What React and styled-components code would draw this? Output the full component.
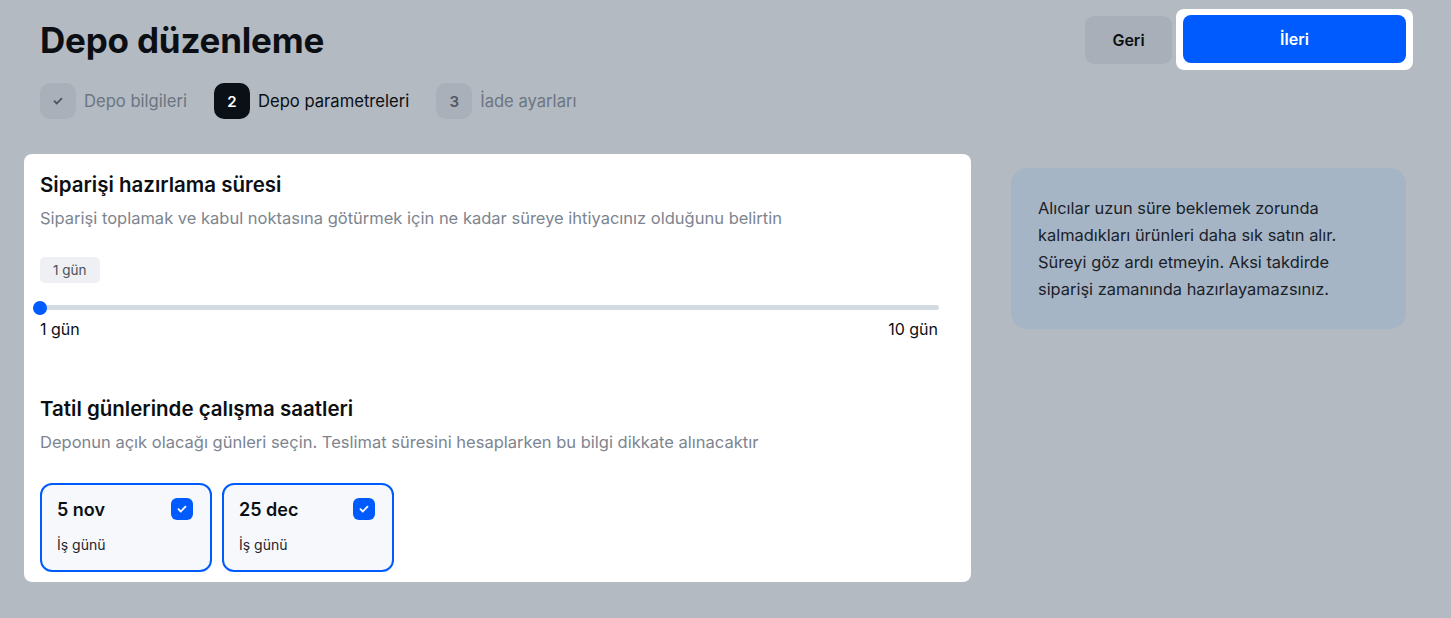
import styled, { createGlobalStyle } from "styled-components";

const GlobalStyle = createGlobalStyle`
  body {
    margin: 0;
    background: #b3bac2;
    font-family: Inter, "Noto Sans", sans-serif;
  }
`;

const steps = [
  { label: "Depo bilgileri", state: "done" },
  { label: "Depo parametreleri", state: "active", n: 2 },
  { label: "İade ayarları", state: "todo", n: 3 },
];

const days = [
  { date: "5 nov", note: "İş günü" },
  { date: "25 dec", note: "İş günü" },
];

function Check({ color = "#fff", size = 12 }) {
  return (
    <svg width={size} height={size} viewBox="0 0 12 12" fill="none">
      <path
        d="M2.5 6.2l2.3 2.3 4.7-4.9"
        stroke={color}
        strokeWidth="1.8"
        strokeLinecap="round"
        strokeLinejoin="round"
      />
    </svg>
  );
}

export default function App() {
  return (
    <Page>
      <GlobalStyle />
      <Header>
        <div>
          <Title>Depo düzenleme</Title>
          <Steps>
            {steps.map((s) => (
              <Step key={s.label}>
                <StepBadge state={s.state}>
                  {s.state === "done" ? <Check color="#4a525c" /> : s.n}
                </StepBadge>
                <StepLabel state={s.state}>{s.label}</StepLabel>
              </Step>
            ))}
          </Steps>
        </div>
        <Actions>
          <BackButton>Geri</BackButton>
          <Spotlight>
            <NextButton>İleri</NextButton>
          </Spotlight>
        </Actions>
      </Header>

      <Body>
        <Card>
          <SectionTitle>Siparişi hazırlama süresi</SectionTitle>
          <SectionHint>
            Siparişi toplamak ve kabul noktasına götürmek için ne kadar süreye
            ihtiyacınız olduğunu belirtin
          </SectionHint>
          <ValueChip>1 gün</ValueChip>
          <Track>
            <Thumb />
          </Track>
          <TrackLabels>
            <span>1 gün</span>
            <span>10 gün</span>
          </TrackLabels>

          <SectionTitle second>Tatil günlerinde çalışma saatleri</SectionTitle>
          <SectionHint>
            Deponun açık olacağı günleri seçin. Teslimat süresini hesaplarken bu
            bilgi dikkate alınacaktır
          </SectionHint>
          <DayRow>
            {days.map((d) => (
              <DayCard key={d.date}>
                <DayTop>
                  <DayDate>{d.date}</DayDate>
                  <CheckBox>
                    <Check />
                  </CheckBox>
                </DayTop>
                <DayNote>{d.note}</DayNote>
              </DayCard>
            ))}
          </DayRow>
        </Card>

        <Info>
          Alıcılar uzun süre beklemek zorunda kalmadıkları ürünleri daha sık
          satın alır. Süreyi göz ardı etmeyin. Aksi takdirde siparişi zamanında
          hazırlayamazsınız.
        </Info>
      </Body>
    </Page>
  );
}

const Page = styled.div`
  width: 1451px;
  height: 618px;
  box-sizing: border-box;
  padding: 9px 38px 0 24px;
`;

const Header = styled.div`
  display: flex;
  justify-content: space-between;
  align-items: flex-start;
  padding-left: 16px;
`;

const Title = styled.h1`
  margin: 10px 0 0;
  font-size: 35px;
  line-height: 42px;
  font-weight: 700;
  color: #0b0f14;
  letter-spacing: -0.2px;
`;

const Steps = styled.div`
  display: flex;
  gap: 27px;
  margin-top: 22px;
`;

const Step = styled.div`
  display: flex;
  align-items: center;
  gap: 8px;
`;

const StepBadge = styled.div`
  width: 36px;
  height: 36px;
  border-radius: 10px;
  display: flex;
  align-items: center;
  justify-content: center;
  font-size: 15px;
  font-weight: 600;
  background: ${(p) => (p.state === "active" ? "#0b1016" : "#a9b0b9")};
  color: ${(p) => (p.state === "active" ? "#ffffff" : "#4f5863")};
`;

const StepLabel = styled.span`
  font-size: 16.6px;
  color: ${(p) => (p.state === "active" ? "#0b0f14" : "#6c7581")};
`;

const Actions = styled.div`
  display: flex;
  align-items: center;
  gap: 4px;
`;

const BackButton = styled.button`
  width: 87px;
  height: 48px;
  border: none;
  border-radius: 9px;
  background: #a8afb8;
  font-family: inherit;
  font-size: 16px;
  font-weight: 600;
  color: #0b0f14;
`;

const Spotlight = styled.div`
  padding: 6px 7px 7px;
  background: #ffffff;
  border-radius: 8px;
`;

const NextButton = styled.button`
  display: block;
  width: 223px;
  height: 48px;
  border: none;
  border-radius: 8px;
  background: #005bff;
  font-family: inherit;
  font-size: 16px;
  font-weight: 600;
  color: #ffffff;
`;

const Body = styled.div`
  display: flex;
  align-items: flex-start;
  gap: 40px;
  margin-top: 35px;
`;

const Card = styled.div`
  width: 947px;
  box-sizing: border-box;
  background: #ffffff;
  border-radius: 8px;
  padding: 18px 16px 10px;
`;

const SectionTitle = styled.h2`
  margin: ${(p) => (p.second ? "57px" : "0")} 0 0;
  font-size: 20.5px;
  line-height: 26px;
  font-weight: 600;
  color: #0b0f14;
`;

const SectionHint = styled.p`
  margin: 10px 0 0;
  font-size: 16.5px;
  line-height: 20px;
  color: #7d858f;
`;

const ValueChip = styled.div`
  display: inline-flex;
  align-items: center;
  margin-top: 29px;
  height: 26px;
  padding: 0 13px;
  border-radius: 5px;
  background: #eef0f3;
  font-size: 13.5px;
  color: #4a525c;
`;

const Track = styled.div`
  position: relative;
  margin: 22px 0 0 -7px;
  width: 906px;
  height: 5px;
  border-radius: 3px;
  background: #d4dae2;
`;

const Thumb = styled.div`
  position: absolute;
  left: 0;
  top: -4.5px;
  width: 14px;
  height: 14px;
  border-radius: 50%;
  background: #005bff;
`;

const TrackLabels = styled.div`
  display: flex;
  justify-content: space-between;
  width: 898px;
  margin-top: 9px;
  font-size: 16px;
  color: #0b0f14;
`;

const DayRow = styled.div`
  display: flex;
  gap: 10px;
  margin-top: 31px;
`;

const DayCard = styled.div`
  width: 172px;
  height: 89px;
  box-sizing: border-box;
  border: 2px solid #005bff;
  border-radius: 12px;
  background: #f6f8fb;
  padding: 13px 17px 0 15px;
`;

const DayTop = styled.div`
  display: flex;
  justify-content: space-between;
  align-items: center;
`;

const DayDate = styled.span`
  font-size: 18px;
  font-weight: 600;
  color: #0b0f14;
`;

const CheckBox = styled.div`
  width: 22px;
  height: 22px;
  border-radius: 6px;
  background: #005bff;
  display: flex;
  align-items: center;
  justify-content: center;
`;

const DayNote = styled.div`
  margin-top: 16px;
  font-size: 14px;
  color: #1f252c;
`;

const Info = styled.div`
  margin-top: 14px;
  width: 395px;
  box-sizing: border-box;
  padding: 27px 26px 26px 27px;
  border-radius: 16px;
  background: #a6b5c5;
  font-size: 16.4px;
  line-height: 27px;
  color: #1a2129;
`;
